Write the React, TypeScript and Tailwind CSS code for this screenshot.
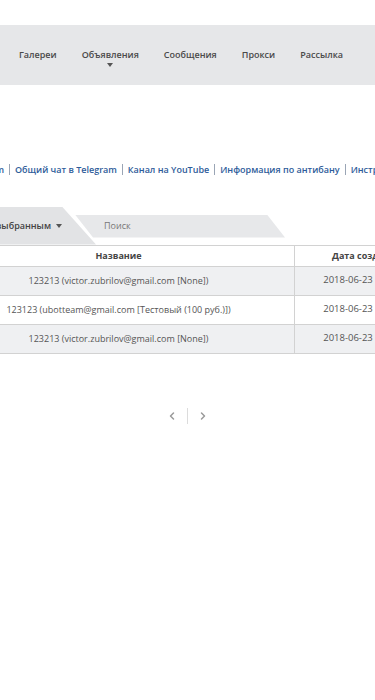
import { ChevronLeft, ChevronRight } from 'lucide-react';

const navItems = ['Галереи', 'Объявления', 'Сообщения', 'Прокси', 'Рассылка'];

const links = ['Общий чат в Telegram', 'Канал на YouTube', 'Информация по антибану', 'Инструкции'];

const rows = [
  { name: '123213 (victor.zubrilov@gmail.com [None])', date: '2018-06-23' },
  { name: '123123 (ubotteam@gmail.com [Тестовый (100 руб.)])', date: '2018-06-23' },
  { name: '123213 (victor.zubrilov@gmail.com [None])', date: '2018-06-23' },
];

export default function App() {
  return (
    <div className="w-[375px] h-[700px] overflow-hidden bg-white font-['Open_Sans',sans-serif] text-[9px]">
      <div className="h-[25px]" />
      {/* top menu */}
      <nav className="h-[60px] bg-[#e6e7e9] flex items-center pl-[19px] gap-[25px] whitespace-nowrap">
        {navItems.map((item) => (
          <div key={item} className="relative font-semibold text-[#4a4a4a]">
            {item}
            {item === 'Объявления' && (
              <span className="absolute left-1/2 top-[15px] -translate-x-1/2 w-0 h-0 border-l-[3.5px] border-r-[3.5px] border-t-[4px] border-l-transparent border-r-transparent border-t-[#555]" />
            )}
          </div>
        ))}
      </nav>

      {/* links */}
      <div className="mt-[78px] flex items-center whitespace-nowrap font-semibold text-[#2e5c9a]">
        <div className="w-[4px] flex justify-end">
          <span>Канал в Telegram</span>
        </div>
        {links.map((link) => (
          <div key={link} className="flex items-center">
            <span className="mx-[5px] w-px h-[11px] bg-[#9aa5b5]" />
            <span>{link}</span>
          </div>
        ))}
      </div>

      {/* tabs */}
      <div className="relative mt-[30px] h-[38px]">
        <div className="absolute left-[75px] top-[8px] w-[210px] h-[23px] bg-[#e7e8ea] [clip-path:polygon(0_0,192px_0,100%_100%,18px_100%)] flex items-center pl-[29px] text-[#777]">
          Поиск
        </div>
        <div className="absolute left-0 top-0 w-[96px] h-[38px] bg-[#e2e3e5] [clip-path:polygon(0_0,62px_0,100%_100%,0_100%)] flex items-center">
          <div className="w-[51px] flex justify-end whitespace-nowrap font-semibold text-[#444]">
            <span>Сортировка по выбранным</span>
          </div>
          <span className="ml-[5px] w-0 h-0 border-l-[3px] border-r-[3px] border-t-[4px] border-l-transparent border-r-transparent border-t-[#555]" />
        </div>
      </div>

      {/* table */}
      <div className="ml-[-57px] w-[470px] border-t border-[#d2d2d2]">
        <div className="flex h-[21px] border-b border-[#d2d2d2] font-bold text-[#444]">
          <div className="w-[352px] border-r border-[#d2d2d2] flex items-center justify-center">Название</div>
          <div className="w-[110px] flex items-center pl-[37px] whitespace-nowrap">Дата создания</div>
        </div>
        {rows.map((row, i) => (
          <div
            key={i}
            className={`flex h-[29px] border-b border-[#d2d2d2] text-[#555] ${i % 2 === 0 ? 'bg-[#eff0f2]' : 'bg-white'}`}
          >
            <div className="w-[352px] border-r border-[#d2d2d2] flex items-center justify-center whitespace-nowrap">{row.name}</div>
            <div className="w-[106px] flex items-center justify-center text-[9.5px]">{row.date}</div>
          </div>
        ))}
      </div>

      {/* pagination */}
      <div className="mt-[54px] flex items-center justify-center gap-[9px] text-[#9a9a9a]">
        <ChevronLeft size={12} strokeWidth={3} />
        <span className="w-px h-[16px] bg-[#dcdcdc]" />
        <ChevronRight size={12} strokeWidth={3} />
      </div>
    </div>
  );
}
